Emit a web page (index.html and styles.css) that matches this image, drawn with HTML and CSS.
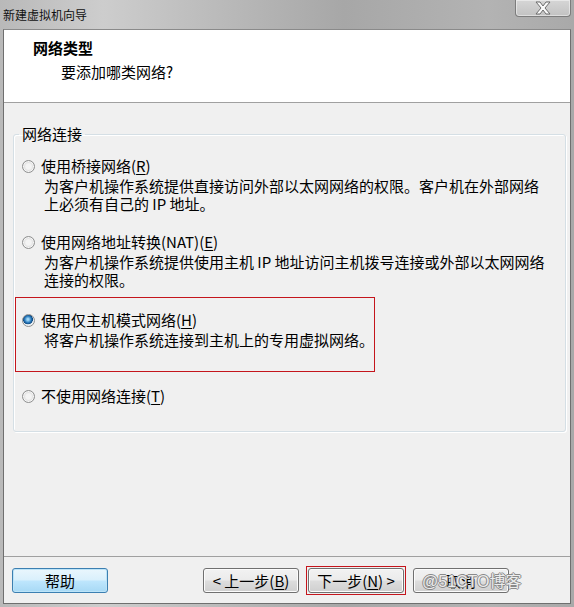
FILE: index.html
```html
<!DOCTYPE html>
<html lang="zh-CN">
<head>
<meta charset="utf-8">
<title>新建虚拟机向导</title>
<link rel="stylesheet" href="styles.css">
</head>
<body>
<div class="window">
  <div class="titlebar">
    <span class="title">新建虚拟机向导</span>
    <span class="close"><svg width="22" height="14" viewBox="0 0 22 14"><path d="M4 1 L8 1 L11 5 L14 1 L18 1 L13 7 L18 13 L14 13 L11 9 L8 13 L4 13 L9 7 Z" fill="#fafafa" stroke="#6d6d6d" stroke-width="1"/></svg></span>
  </div>
  <div class="client">
    <div class="header">
      <div class="h-title">网络类型</div>
      <div class="h-sub">要添加哪类网络?</div>
    </div>
    <div class="body">
      <fieldset class="group">
        <legend>网络连接</legend>
        <div class="opt opt1">
          <div class="lbl"><span class="radio"></span>使用桥接网络(<u>R</u>)</div>
          <div class="desc">为客户机操作系统提供直接访问外部以太网网络的权限。客户机在外部网络<br>上必须有自己的 IP 地址。</div>
        </div>
        <div class="opt opt2">
          <div class="lbl"><span class="radio"></span>使用网络地址转换(NAT)(<u>E</u>)</div>
          <div class="desc">为客户机操作系统提供使用主机 IP 地址访问主机拨号连接或外部以太网网络<br>连接的权限。</div>
        </div>
        <div class="opt opt3">
          <div class="lbl"><span class="radio checked"></span>使用仅主机模式网络(<u>H</u>)</div>
          <div class="desc">将客户机操作系统连接到主机上的专用虚拟网络。</div>
        </div>
        <div class="opt opt4">
          <div class="lbl"><span class="radio"></span>不使用网络连接(<u>T</u>)</div>
        </div>
      </fieldset>
    </div>
    <div class="footer">
      <button class="btn help">帮助</button>
      <div class="spacer"></div>
      <button class="btn prev">&lt; 上一步(<u>B</u>)</button>
      <span class="nextwrap"><button class="btn next">下一步(<u>N</u>) &gt;</button></span>
      <span class="cancelwrap"><button class="btn cancel">取消</button><span class="watermark">@51CTO博客</span></span>
    </div>
  </div>
</div>
</body>
</html>
```

FILE: styles.css
```css
html, body {
  margin: 0;
  padding: 0;
}
body {
  width: 574px;
  height: 607px;
  overflow: hidden;
  font-family: "Noto Sans CJK SC", "Noto Sans", sans-serif;
  color: #000;
}
.window {
  width: 574px;
  height: 607px;
  box-sizing: border-box;
  display: flex;
  flex-direction: column;
  background: linear-gradient(to right, #b9b9b9 0%, #cdcdcd 18%, #bdbdbd 35%, #a7a7a7 60%, #b3b3b3 85%, #a9a9a9 100%);
}
.titlebar {
  height: 29px;
  flex: none;
  display: flex;
  justify-content: space-between;
  align-items: flex-start;
}
.title {
  font-size: 12px;
  line-height: 14px;
  margin: 8px 0 0 3px;
  color: #111;
}
.close {
  width: 56px;
  height: 17px;
  margin-right: 3px;
  box-sizing: border-box;
  border: 1px solid #7c7c7c;
  border-top: none;
  border-radius: 0 0 4px 4px;
  background: linear-gradient(#d6d6d6, #c2c2c2);
  box-shadow: inset 0 0 0 1px rgba(255,255,255,0.45);
  display: flex;
  justify-content: center;
  align-items: center;
}
.close svg { display: block; margin-top: -1px; }
.client {
  flex: 1;
  margin: 0 3px 3px 3px;
  border: 1px solid #6f6f6f;
  border-top-color: #8a8a8a;
  background: #f0f0f0;
  display: flex;
  flex-direction: column;
}
.header {
  height: 72px;
  flex: none;
  background: #fff;
  border-bottom: 1px solid #a0a0a0;
}
.h-title {
  font-size: 15px;
  font-weight: bold;
  line-height: 18px;
  margin: 9px 0 0 29px;
}
.h-sub {
  font-size: 15px;
  line-height: 18px;
  margin: 6px 0 0 57px;
}
.body {
  flex: 1;
  padding: 22px 11px 0 9px;
  font-size: 15px;
  line-height: 18px;
}
.group {
  margin: 0;
  padding: 10px 8px 26px 0;
  border: 1px solid #d5dfe5;
  border-radius: 3px;
  box-shadow: inset 1px 1px 0 #fff, 1px 1px 0 #fff;
}
.group legend {
  padding: 0 3px;
  margin-left: 5px;
  font-size: 15px;
  line-height: 18px;
}
.lbl {
  display: flex;
  align-items: center;
  padding-left: 8px;
  height: 18px;
  white-space: nowrap;
}
.radio {
  width: 13px;
  height: 13px;
  border-radius: 50%;
  box-sizing: border-box;
  border: 1px solid #8e8f8f;
  background: radial-gradient(circle at 50% 50%, #f4f4f4 0 35%, #dcdcdc 60%, #c9c9c9 100%);
  margin-right: 6px;
  flex: none;
  box-shadow: inset 0 0 0 1px #f7f7f7;
}
.radio.checked {
  background: radial-gradient(circle at 45% 40%, #9fd7f7 0 10%, #2f7fc0 35%, #0d4a83 52%, #e8eef2 58%, #f3f3f3 100%);
  box-shadow: none;
}
.desc {
  margin-left: 30px;
  margin-top: 2px;
  white-space: nowrap;
}
.opt1 { margin-top: 4px; }
.opt2 { margin-top: 20px; }
.opt3 {
  margin: 8px 182px 0 1px;
  border: 1px solid #c4151c;
  padding: 13px 0 22px 0;
}
.opt3 .lbl { padding-left: 6px; }
.opt3 .desc { margin-left: 28px; }
.opt4 { margin-top: 15px; }
.footer {
  height: 47px;
  flex: none;
  border-top: 1px solid #a0a0a0;
  display: flex;
  align-items: flex-start;
  padding: 11px 61px 0 8px;
  box-sizing: border-box;
}
.spacer { flex: 1; }
.btn {
  height: 25px;
  width: 96px;
  box-sizing: border-box;
  font-family: "Noto Sans CJK SC", "Noto Sans", sans-serif;
  font-size: 15px;
  line-height: 18px;
  padding: 0;
  border: 1px solid #707070;
  border-radius: 3px;
  background: linear-gradient(#f2f2f2 0%, #ebebeb 48%, #dddddd 52%, #cfcfcf 100%);
  box-shadow: inset 0 0 0 1px #fcfcfc;
  color: #000;
  white-space: nowrap;
}
.help {
  border-color: #3c7fb1;
  background: linear-gradient(#eaf6fd 0%, #d9f0fc 48%, #bee6fd 52%, #a7d9f5 100%);
  box-shadow: inset 0 0 0 1px #bde4f8;
}
.prev { margin-right: 7px; }
.nextwrap {
  border: 1px solid #c4151c;
  padding: 1px;
  margin-top: -2px;
  display: flex;
}
.cancelwrap {
  position: relative;
  margin-left: 7px;
  display: flex;
}
.watermark {
  position: absolute;
  left: 9px;
  top: 4px;
  font-family: "Liberation Sans", "Noto Sans CJK SC", sans-serif;
  font-size: 16px;
  line-height: 20px;
  white-space: nowrap;
  color: rgba(255,255,255,0.85);
  text-shadow: -1px 0 #8a8a8a, 1px 0 #8a8a8a, 0 -1px #8a8a8a, 0 1px #8a8a8a;
}
u { text-decoration: underline; text-underline-offset: 2px; }
```
